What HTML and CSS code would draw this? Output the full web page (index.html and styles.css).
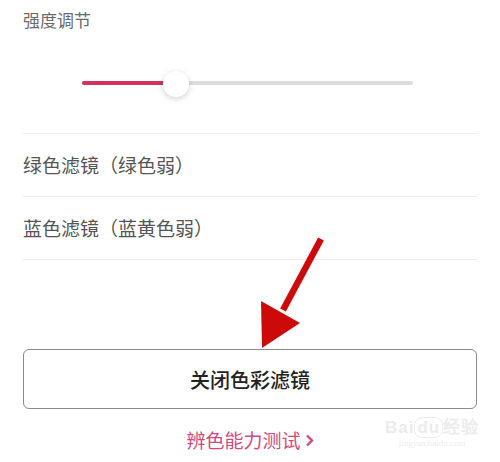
FILE: index.html
```html
<!DOCTYPE html>
<html lang="zh-CN">
<head>
    <meta charset="UTF-8">
    <meta name="viewport" content="width=device-width, initial-scale=1.0">
    <title>色彩滤镜</title>
    <link rel="stylesheet" href="styles.css">
</head>
<body>
    <div class="page">
        <div class="section-title">强度调节</div>
        <div class="slider-row">
            <div class="slider">
                <div class="slider-fill" style="width: 25%;"></div>
                <div class="slider-thumb" style="left: 28.5%;"></div>
            </div>
        </div>
        <ul class="filter-list">
            <li>绿色滤镜（绿色弱）</li>
            <li>蓝色滤镜（蓝黄色弱）</li>
        </ul>
        <div class="spacer"></div>
        <button class="close-btn">关闭色彩滤镜</button>
        <div class="test-link">
            辨色能力测试
            <svg class="chev" width="9" height="13" viewBox="0 0 9 13">
                <polyline points="2,1.5 7,6.5 2,11.5" fill="none" stroke="#d14a7c" stroke-width="2.4"/>
            </svg>
        </div>
    </div>

    <!-- annotation arrow drawn over the page -->
    <svg class="arrow" width="500" height="462" viewBox="0 0 500 462">
        <line x1="321" y1="239" x2="283" y2="310" stroke="#cc0a0a" stroke-width="6.5"/>
        <polygon points="261,301 300,323 262,348" fill="#cc0a0a"/>
    </svg>

    <div class="watermark">
        <span class="wm-logo">Bai<span class="wm-du">du</span>经验</span>
        <span class="wm-url">jingyan.baidu.com</span>
    </div>
</body>
</html>
```

FILE: styles.css
```css
body {
    margin: 0;
    background-color: #fff;
    font-family: "Noto Sans CJK SC", "Noto Sans", sans-serif;
}
.page {
    width: 500px;
    height: 462px;
    box-sizing: border-box;
    padding: 6px 23px 0 23px;
    display: flex;
    flex-direction: column;
}
.section-title {
    font-size: 17px;
    color: #6a6a6a;
    line-height: 28px;
}
.slider-row {
    height: 100px;
    padding: 0 64px 0 59px;
    display: flex;
    align-items: center;
    border-bottom: 1px solid #ececec;
    box-sizing: border-box;
}
.slider {
    position: relative;
    flex: 1;
    height: 4px;
    margin-top: -2px;
    border-radius: 2px;
    background-color: #dcdcdc;
}
.slider-fill {
    height: 100%;
    border-radius: 2px;
    background-color: #d4325d;
}
.slider-thumb {
    position: absolute;
    top: 50%;
    width: 26px;
    height: 26px;
    margin: -12px 0 0 -13px;
    border-radius: 50%;
    background-color: #fff;
    box-shadow: 0 2px 6px rgba(0, 0, 0, 0.18);
}
.filter-list {
    list-style-type: none;
    padding: 0;
    margin: 0;
}
.filter-list li {
    height: 62px;
    line-height: 62px;
    font-size: 19px;
    color: #555;
    border-bottom: 1px solid #ececec;
}
.spacer {
    flex: 1;
}
.close-btn {
    height: 60px;
    width: 100%;
    background-color: #fff;
    border: 1px solid #8a8a8a;
    border-radius: 6px;
    font-family: inherit;
    font-size: 20px;
    font-weight: 500;
    color: #222;
}
.test-link {
    margin: 17px 0 8px 0;
    display: flex;
    justify-content: center;
    align-items: center;
    gap: 4px;
    font-size: 19px;
    line-height: 28px;
    color: #d14a7c;
}
.chev {
    margin-top: 1px;
}
.arrow {
    position: absolute;
    top: 0;
    left: 0;
    pointer-events: none;
}
.watermark {
    position: absolute;
    left: 385px;
    top: 413px;
    display: flex;
    flex-direction: column;
    align-items: center;
    color: #ececec;
    font-family: "Liberation Sans", sans-serif;
}
.wm-logo {
    font-size: 17px;
    font-weight: bold;
    letter-spacing: 1px;
}
.wm-du {
    border: 1px solid #ececec;
    border-radius: 8px;
    padding: 0 2px;
}
.wm-url {
    font-size: 9px;
    font-family: "Liberation Serif", serif;
}
```
